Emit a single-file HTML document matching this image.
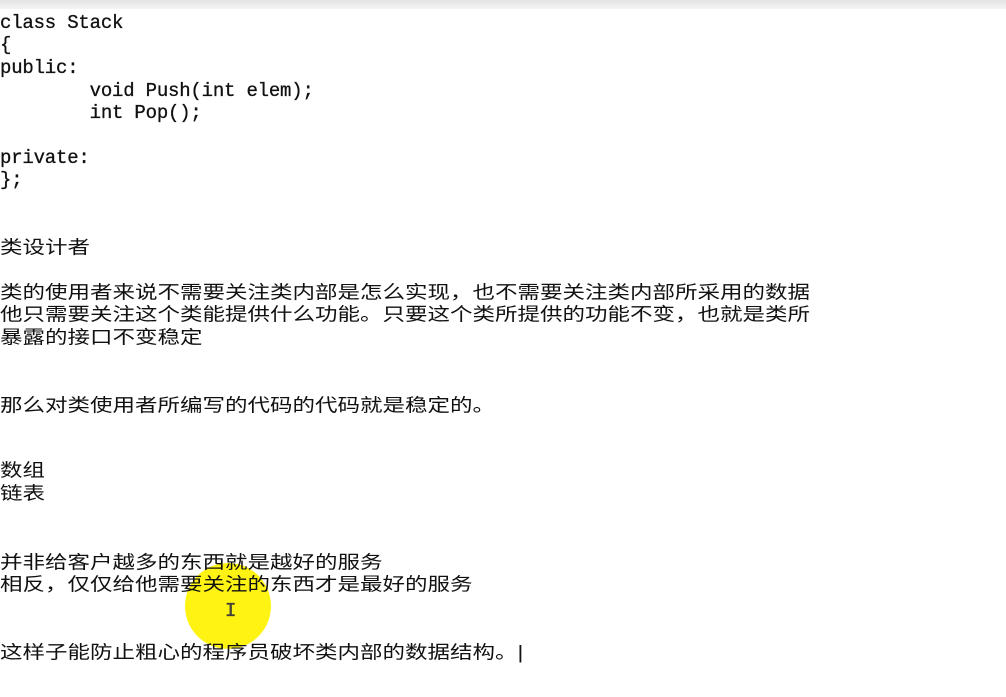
<!DOCTYPE html>
<html><head><meta charset="utf-8"><style>
body{margin:0;width:1006px;height:697px;background:#fff;overflow:hidden;position:relative}
.bar{position:absolute;left:0;top:0;width:1006px;height:9px;background:linear-gradient(#e4e4e4,#f4f4f4)}
.l{position:absolute;left:0;white-space:pre;color:#111;line-height:22px;height:22px}
.m{font-family:"Liberation Mono",monospace;font-size:19px;letter-spacing:-0.2px;-webkit-text-stroke:0.3px #111}
.c{font-family:"Liberation Sans","WenQuanYi Zen Hei","Noto Sans CJK SC",sans-serif;font-size:22.5px;letter-spacing:0px;transform:scaleY(0.82);transform-origin:left center}
.dot{position:absolute;left:185px;top:563px;width:86px;height:86px;border-radius:50%;background:#fff200;opacity:.92}
</style></head><body>
<div class="bar"></div>
<div class="dot"></div>
<div class="l m" style="top:12px">class Stack</div>
<div class="l m" style="top:34px">{</div>
<div class="l m" style="top:57px">public:</div>
<div class="l m" style="top:80px">        void Push(int elem);</div>
<div class="l m" style="top:102px">        int Pop();</div>
<div class="l m" style="top:147px">private:</div>
<div class="l m" style="top:169px">};</div>
<div class="l c" style="top:237px">类设计者</div>
<div class="l c" style="top:282px">类的使用者来说不需要关注类内部是怎么实现，也不需要关注类内部所采用的数据</div>
<div class="l c" style="top:304px">他只需要关注这个类能提供什么功能。只要这个类所提供的功能不变，也就是类所</div>
<div class="l c" style="top:327px">暴露的接口不变稳定</div>
<div class="l c" style="top:395px">那么对类使用者所编写的代码的代码就是稳定的。</div>
<div class="l c" style="top:460px">数组</div>
<div class="l c" style="top:483px">链表</div>
<div class="l c" style="top:552px">并非给客户越多的东西就是越好的服务</div>
<div class="l c" style="top:574px">相反，仅仅给他需要关注的东西才是最好的服务</div>
<div class="l c" style="top:642px">这样子能防止粗心的程序员破坏类内部的数据结构。|</div>
<div class="l m" style="top:600px;left:225px;color:#444">I</div>
</body></html>
